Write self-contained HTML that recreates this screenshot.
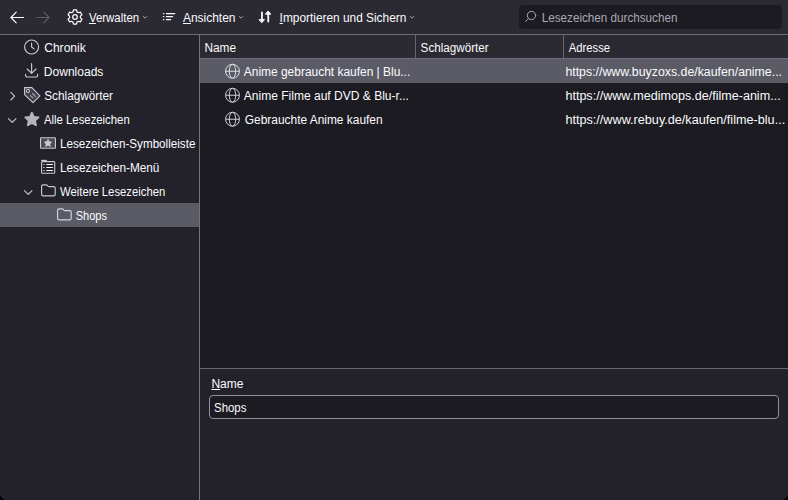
<!DOCTYPE html>
<html>
<head>
<meta charset="utf-8">
<title>Bibliothek</title>
<style>
*{box-sizing:border-box;margin:0;padding:0}
html,body{width:788px;height:500px;overflow:hidden;background:#000}
body{font-family:"Liberation Sans",sans-serif;font-size:12px;color:#fbfbfe;position:relative}
#win{position:absolute;left:0;top:0;width:788px;height:500px;background:#23222b;border-radius:0 0 7px 7px;overflow:hidden}
.abs{position:absolute}
#toolbar{left:0;top:0;width:788px;height:34px;background:#2b2a33}
#tbline{left:0;top:34px;width:788px;height:1px;background:#6c6c75}
#side{left:0;top:35px;width:199px;height:465px;background:#23222b}
#split{left:199px;top:35px;width:1px;height:465px;background:#74747d}
#hdr{left:200px;top:35px;width:588px;height:23px;background:#2b2a33}
#hdrline{left:200px;top:58px;width:588px;height:1px;background:#6e6e78}
#list{left:200px;top:59px;width:588px;height:309px;background:#1c1b22}
#paneline{left:200px;top:368px;width:588px;height:1px;background:#66666f}
#pane{left:200px;top:369px;width:588px;height:131px;background:#23222b}
.sel{background:#5b5b66}
.t{position:absolute;white-space:nowrap;line-height:16px;height:16px;transform-origin:0 50%}
.ic{position:absolute;width:16px;height:16px;overflow:visible}
.colsep{position:absolute;top:35px;width:1px;height:23px;background:#66666f}
u{text-decoration:underline;text-underline-offset:1px}
#search{left:519px;top:5px;width:263px;height:24px;background:#1c1b22;border-radius:4px}
#name{left:209px;top:395px;width:570px;height:24px;background:#1c1b22;border:1px solid #8f8f9d;border-radius:4px}
</style>
<style id="fit">
#t1{transform:translateX(-0.10px) scaleX(0.9527)}
#t2{transform:translateX(-0.10px) scaleX(0.9968)}
#t3{transform:translateX(0.60px) scaleX(0.9892)}
#t4{transform:translateX(-1.20px) scaleX(0.9726)}
#s1{transform:translateX(0.20px) scaleX(1.0054)}
#s2{transform:translateX(-0.20px) scaleX(1.0037)}
#s3{transform:translateX(0.20px) scaleX(0.9830)}
#s4{transform:translateX(0.00px) scaleX(0.9446)}
#s5{transform:translateX(0.00px) scaleX(0.9713)}
#s6{transform:translateX(0.00px) scaleX(0.9800)}
#s7{transform:translateX(0.00px) scaleX(0.9411)}
#s8{transform:translateX(-0.30px) scaleX(0.9185)}
#h1{transform:translateX(0.40px) scaleX(0.9880)}
#h2{transform:translateX(0.60px) scaleX(0.9718)}
#h3{transform:translateX(0.80px) scaleX(0.9374)}
#r1{transform:translateX(-0.20px) scaleX(0.9953)}
#r2{transform:translateX(-0.20px) scaleX(1.0025)}
#r3{transform:translateX(0.80px) scaleX(0.9929)}
#a1{transform:translateX(0.40px) scaleX(1.0276)}
#a2{transform:translateX(0.40px) scaleX(1.0478)}
#a3{transform:translateX(0.40px) scaleX(1.0539)}
#p1{transform:translateX(0.40px) scaleX(1.0010)}
#p2{transform:translateX(0.00px) scaleX(0.9536)}
</style>
</head>
<body>
<div id="win">
<div id="toolbar" class="abs"></div>
<div id="tbline" class="abs"></div>
<div id="side" class="abs"></div>
<div id="split" class="abs"></div>
<div id="hdr" class="abs"></div>
<div id="hdrline" class="abs"></div>
<div id="list" class="abs"></div>
<div id="paneline" class="abs"></div>
<div id="pane" class="abs"></div>

<!-- selected rows -->
<div class="abs sel" style="left:0;top:203px;width:199px;height:24px"></div>
<div class="abs sel" style="left:200px;top:59px;width:588px;height:24px"></div>

<!-- column separators -->
<div class="colsep" style="left:415px"></div>
<div class="colsep" style="left:563px"></div>

<!-- toolbar icons -->
<svg class="ic" style="left:9px;top:9px" viewBox="0 0 16 16" fill="none" stroke="#fbfbfe" stroke-width="1.2" stroke-linecap="round" stroke-linejoin="round"><path d="M14.6 8.5H1.9M7.2 3.2 1.9 8.5l5.3 5.3"/></svg>
<svg class="ic" style="left:35px;top:9px" viewBox="0 0 16 16" fill="none" stroke="#5e5d67" stroke-width="1.2" stroke-linecap="round" stroke-linejoin="round"><path d="M1.8 8.5h12.3M8.8 3.2l5.3 5.3-5.3 5.3"/></svg>
<svg class="ic" style="left:67px;top:9px" viewBox="0 0 16 16" fill="none" stroke="#fbfbfe" stroke-width="1.25" stroke-linejoin="round"><path d="M6.03 2.87 L6.49 0.91 L9.51 0.91 L9.97 2.87 L11.46 3.73 L13.39 3.15 L14.90 5.76 L13.43 7.14 L13.43 8.86 L14.90 10.24 L13.39 12.85 L11.46 12.27 L9.97 13.13 L9.51 15.09 L6.49 15.09 L6.03 13.13 L4.54 12.27 L2.61 12.85 L1.10 10.24 L2.57 8.86 L2.57 7.14 L1.10 5.76 L2.61 3.15 L4.54 3.73Z"/><circle cx="8" cy="8" r="2.3"/></svg>
<svg class="ic" style="left:161px;top:9px" viewBox="0 0 16 16" fill="none" stroke="#fbfbfe" stroke-width="1.25" stroke-linecap="round"><path d="M2.4 4.6h.4M2.4 7.6h.4M2.4 10.6h.4M5.4 4.6h8.4M5.4 7.6h6.2M5.4 10.6h4.2"/></svg>
<svg class="ic" style="left:257px;top:9px" viewBox="0 0 16 16" fill="#fbfbfe" stroke="#fbfbfe" stroke-width="1.8" stroke-linecap="round" stroke-linejoin="round"><path d="M4.95 3.3v8.3M11.25 12.5V4.3" fill="none"/><path d="M2.45 10.6h5l-2.5 2.9zM8.75 5.2h5l-2.5-2.9z" stroke-width="1"/></svg>
<!-- chevrons -->
<svg class="ic" style="left:141px;top:13px;width:8px;height:8px" viewBox="0 0 8 8" fill="none" stroke="#a5a5ae" stroke-width="1" stroke-linecap="round" stroke-linejoin="round"><path d="M2.3 3.5l1.7 1.7 1.7-1.7"/></svg>
<svg class="ic" style="left:237px;top:13px;width:8px;height:8px" viewBox="0 0 8 8" fill="none" stroke="#a5a5ae" stroke-width="1" stroke-linecap="round" stroke-linejoin="round"><path d="M2.3 3.5l1.7 1.7 1.7-1.7"/></svg>
<svg class="ic" style="left:408px;top:13px;width:8px;height:8px" viewBox="0 0 8 8" fill="none" stroke="#a5a5ae" stroke-width="1" stroke-linecap="round" stroke-linejoin="round"><path d="M2.3 3.5l1.7 1.7 1.7-1.7"/></svg>

<!-- toolbar text -->
<div class="t" id="t1" style="left:89px;top:10px"><u>V</u>erwalten</div>
<div class="t" id="t2" style="left:183px;top:10px"><u>A</u>nsichten</div>
<div class="t" id="t3" style="left:279px;top:10px"><u>I</u>mportieren und Sichern</div>

<!-- search -->
<div id="search" class="abs"></div>
<svg class="ic" style="left:523.5px;top:9px" viewBox="0 0 16 16" fill="none" stroke="#a9a9b3" stroke-width="1" stroke-linecap="round"><circle cx="7.5" cy="6.5" r="4.15"/><path d="M4.5 9.5 1.6 12.6"/></svg>
<div class="t" id="t4" style="left:543px;top:10px;color:#a9a9b3">Lesezeichen durchsuchen</div>

<!-- sidebar twisties -->
<svg class="ic" style="left:4px;top:87px" viewBox="0 0 16 16" fill="none" stroke="#c9c9d1" stroke-width="1.1" stroke-linecap="round" stroke-linejoin="round"><path d="M6.8 5.4l3.8 3.8-3.8 3.8"/></svg>
<svg class="ic" style="left:4px;top:112px" viewBox="0 0 16 16" fill="none" stroke="#c9c9d1" stroke-width="1.1" stroke-linecap="round" stroke-linejoin="round"><path d="M4.4 6.6l3.8 3.8 3.8-3.8"/></svg>
<svg class="ic" style="left:20px;top:184px" viewBox="0 0 16 16" fill="none" stroke="#c9c9d1" stroke-width="1.1" stroke-linecap="round" stroke-linejoin="round"><path d="M4.4 6.6l3.8 3.8 3.8-3.8"/></svg>

<!-- sidebar icons -->
<svg class="ic" style="left:24px;top:39px" viewBox="0 0 16 16" fill="none" stroke="#c9c9d1" stroke-width="1.15" stroke-linecap="round" stroke-linejoin="round"><circle cx="7.6" cy="8" r="7"/><path d="M7.6 4v4l2.5 1.9"/></svg>
<svg class="ic" style="left:24px;top:63px" viewBox="0 0 16 16" fill="none" stroke="#c9c9d1" stroke-width="1.15" stroke-linecap="round" stroke-linejoin="round"><path d="M7.6 0.6v9.6M3.2 6l4.4 4.4L12 6M1.6 11.4v1.2a1.4 1.4 0 0 0 1.4 1.4h9.2a1.4 1.4 0 0 0 1.4-1.4v-1.2"/></svg>
<svg class="ic" style="left:24px;top:87px" viewBox="0 0 16 16" stroke="#c9c9d1" stroke-width="1.1" stroke-linecap="round" stroke-linejoin="round"><path d="M0.6 0.6h7.3l8 8.2-6.9 6.9L0.6 7.6z" fill="rgba(201,201,209,0.18)"/><circle cx="3.9" cy="4" r="1.5" fill="#23222b"/><path d="M8.5 6.5l3.1 3.1M6.4 8.6l2.6 2.3" fill="none" stroke="#a6a6af"/></svg>
<svg class="ic" style="left:24px;top:111px" viewBox="0 0 16 16" fill="#b4b4bd" stroke="#b4b4bd" stroke-width="1.8" stroke-linejoin="round"><path d="M7.90 1.60L9.84 5.93L14.56 6.44L11.04 9.62L12.01 14.26L7.90 11.90L3.79 14.26L4.76 9.62L1.24 6.44L5.96 5.93z"/></svg>
<svg class="ic" style="left:40px;top:135px" viewBox="0 0 16 16" stroke="#c9c9d1" stroke-width="1.1" stroke-linejoin="round"><rect x="0.55" y="2.75" width="14.9" height="10.5" rx="0.6" fill="rgba(201,201,209,0.25)"/><path d="M8.00 4.40L9.12 6.76L11.71 7.09L9.81 8.89L10.29 11.46L8.00 10.20L5.71 11.46L6.19 8.89L4.29 7.09L6.88 6.76z" fill="#c9c9d1" stroke-width="0.8"/></svg>
<svg class="ic" style="left:40px;top:159px" viewBox="0 0 16 16" fill="none" stroke="#c9c9d1" stroke-width="1.1" stroke-linejoin="round"><path d="M1.2 1.5h5.6" stroke-width="1.3"/><rect x="1.6" y="2.6" width="13.1" height="11.6" rx="0.8"/><path d="M3 5.5h1.8M3 8.5h1.8M3 11.5h1.8" stroke="#9a9aa3" stroke-width="1.2"/><path d="M6.3 5.5h6.6M6.3 8.5h6.6M6.3 11.5h6.6" stroke="#fbfbfe" stroke-width="1.15"/></svg>
<svg class="ic" style="left:40px;top:183px" viewBox="0 0 16 16" fill="none" stroke="#c9c9d1" stroke-width="1.15" stroke-linejoin="round"><path d="M1.6 3.4a1.6 1.6 0 0 1 1.6-1.6h2.9c.5 0 .9.2 1.2.6l.4.6c.3.4.7.6 1.2.6h4.7a1.6 1.6 0 0 1 1.6 1.6v6a1.6 1.6 0 0 1-1.6 1.6H3.2a1.6 1.6 0 0 1-1.6-1.6z"/></svg>
<svg class="ic" style="left:56px;top:207px" viewBox="0 0 16 16" fill="none" stroke="#d4d4dc" stroke-width="1.15" stroke-linejoin="round"><path d="M1.6 3.4a1.6 1.6 0 0 1 1.6-1.6h2.9c.5 0 .9.2 1.2.6l.4.6c.3.4.7.6 1.2.6h4.7a1.6 1.6 0 0 1 1.6 1.6v6a1.6 1.6 0 0 1-1.6 1.6H3.2a1.6 1.6 0 0 1-1.6-1.6z"/></svg>

<!-- sidebar text -->
<div class="t" id="s1" style="left:44px;top:40px">Chronik</div>
<div class="t" id="s2" style="left:44px;top:64px">Downloads</div>
<div class="t" id="s3" style="left:44px;top:88px">Schlagwörter</div>
<div class="t" id="s4" style="left:44px;top:112px">Alle Lesezeichen</div>
<div class="t" id="s5" style="left:60px;top:136px">Lesezeichen-Symbolleiste</div>
<div class="t" id="s6" style="left:60px;top:160px">Lesezeichen-Menü</div>
<div class="t" id="s7" style="left:60px;top:184px">Weitere Lesezeichen</div>
<div class="t" id="s8" style="left:76px;top:208px">Shops</div>

<!-- headers -->
<div class="t" id="h1" style="left:204px;top:40px">Name</div>
<div class="t" id="h2" style="left:420px;top:40px">Schlagwörter</div>
<div class="t" id="h3" style="left:568px;top:40px">Adresse</div>

<!-- rows -->
<svg class="ic" style="left:224px;top:63px" viewBox="0 0 16 16" fill="none" stroke="#dcdce4" stroke-width="1"><circle cx="8.5" cy="8.25" r="6.95"/><ellipse cx="8.5" cy="8.25" rx="3.2" ry="6.95"/><path d="M1.5 8.25h14"/></svg>
<svg class="ic" style="left:224px;top:87px" viewBox="0 0 16 16" fill="none" stroke="#cfcfd7" stroke-width="1"><circle cx="8.5" cy="8.25" r="6.95"/><ellipse cx="8.5" cy="8.25" rx="3.2" ry="6.95"/><path d="M1.5 8.25h14"/></svg>
<svg class="ic" style="left:224px;top:111px" viewBox="0 0 16 16" fill="none" stroke="#cfcfd7" stroke-width="1"><circle cx="8.5" cy="8.25" r="6.95"/><ellipse cx="8.5" cy="8.25" rx="3.2" ry="6.95"/><path d="M1.5 8.25h14"/></svg>
<div class="t" id="r1" style="left:244px;top:64px">Anime gebraucht kaufen | Blu...</div>
<div class="t" id="r2" style="left:244px;top:88px">Anime Filme auf DVD &amp; Blu-r...</div>
<div class="t" id="r3" style="left:244px;top:112px">Gebrauchte Anime kaufen</div>
<div class="t" id="a1" style="left:565px;top:64px">https://www.buyzoxs.de/kaufen/anime...</div>
<div class="t" id="a2" style="left:565px;top:88px">https://www.medimops.de/filme-anim...</div>
<div class="t" id="a3" style="left:565px;top:112px">https://www.rebuy.de/kaufen/filme-blu...</div>

<!-- details pane -->
<div class="t" id="p1" style="left:211px;top:376px"><u>N</u>ame</div>
<div id="name" class="abs"></div>
<div class="t" id="p2" style="left:214px;top:400px">Shops</div>
</div>
</body>
</html>
